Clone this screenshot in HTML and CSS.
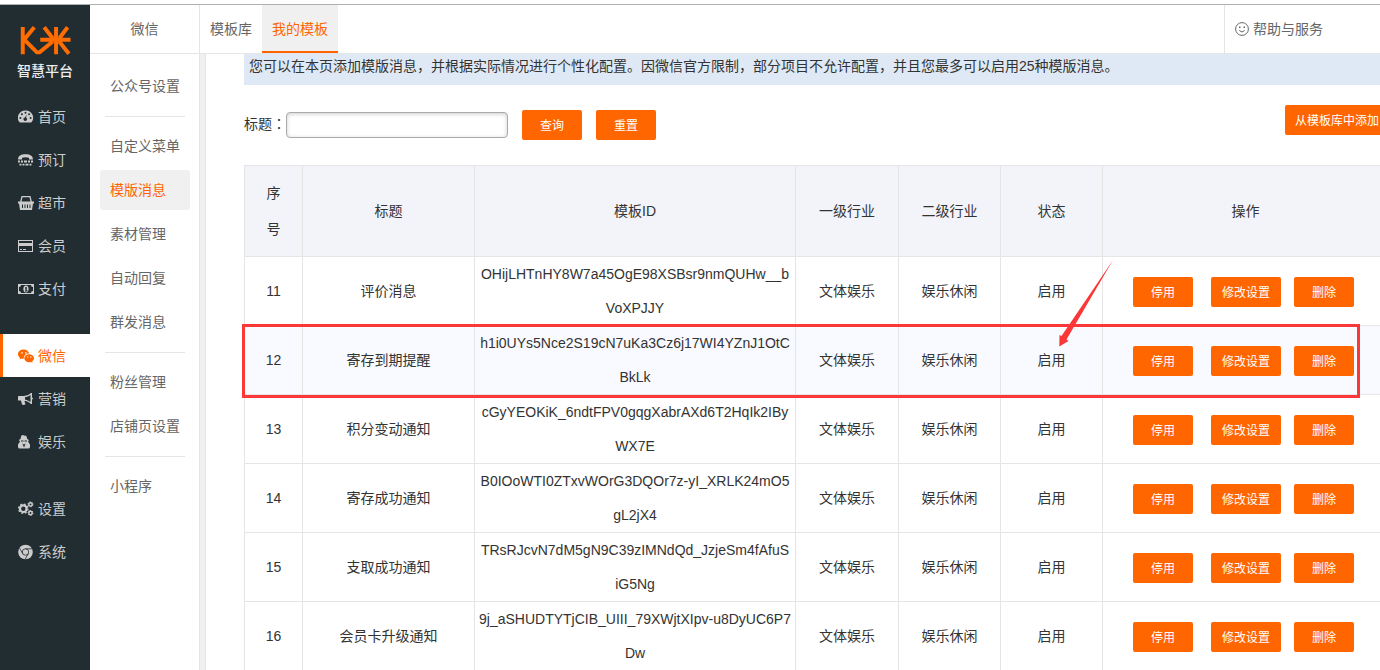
FILE: index.html
```html
<!DOCTYPE html>
<html lang="zh-CN">
<head>
<meta charset="utf-8">
<title>我的模板</title>
<link rel="stylesheet" href="styles.css">
</head>
<body>
<div class="app">
  <nav class="rail" aria-label="主导航">
    <div class="brand">
      <svg class="brand-mark" viewBox="60 78 158 88" fill="none" stroke="#ff6c00" stroke-width="12" aria-hidden="true">
        <path d="M70 81V164M105 82L77 116V122L113 158H121L161 125M123 119.500H215M171 81V164M135 82L161 115M206 82L181 115M180 124L210 162"/>
      </svg>
      <div class="brand-name">智慧平台</div>
    </div>
    <div class="rail-group">
      <a class="rail-item" href="#"><svg viewBox="0 0 16 16"><path fill="currentColor" fill-rule="evenodd" d="M7.500 1.500a7.300 7.300 0 0 0-6.200 11.600q.2.400.7.400h11q.5 0 .7-.4A7.300 7.300 0 0 0 7.500 1.500zM7.500 2.700a1 1 0 1 1 0 2 1 1 0 0 1 0-2zM3.900 4.300a1 1 0 1 1 0 2 1 1 0 0 1 0-2zM11.100 4.300a1 1 0 1 1 0 2 1 1 0 0 1 0-2zM2.400 8a1 1 0 1 1 0 2 1 1 0 0 1 0-2zM12.600 8a1 1 0 1 1 0 2 1 1 0 0 1 0-2zM8.700 5.700L8.100 8.700A1.700 1.700 0 1 1 6.900 8.500z"/></svg>首页</a>
      <a class="rail-item" href="#"><svg viewBox="0 0 16 16"><path fill="currentColor" d="M0 7.500C0 3.500 3.500 2.200 7.500 2.200S15 3.500 15 7.500H11V5.800Q7.500 4.800 4 5.800V7.500zM0 8.500h2v2H0zM3 8.500h2v2H3zM6 8.500h3v2H6zM10 8.500h2v2h-2zM13 8.500h2v2h-2zM1.500 11.800h2v1.700h-2zM4.500 11.800h2v1.700h-2zM7.500 11.800h3v1.700h-3zM11.500 11.800h2v1.700h-2z"/></svg>预订</a>
      <a class="rail-item" href="#"><svg viewBox="0 0 16 16"><path fill="none" stroke="currentColor" stroke-width="1.300" d="M2.500 8L4 1.700H12L13.500 8"/><path fill="currentColor" fill-rule="evenodd" d="M0 6.500H16V8.500H15L14 15H2L1 8.500H0zM4 9.500V13H5V9.500zM6.500 9.500V13h1V9.500zM9 9.500V13h1V9.500zM11.500 9.500V13h1V9.500z"/></svg>超市</a>
      <a class="rail-item" href="#"><svg viewBox="0 0 16 16"><path fill="currentColor" fill-rule="evenodd" d="M0 2H15V14H0zM1 3V5H14V3zM1 8V13H14V8zM2 11H4V12H2zM5 11H8V12H5z"/></svg>会员</a>
      <a class="rail-item" href="#"><svg viewBox="0 0 16 16"><path fill="currentColor" fill-rule="evenodd" d="M0 3H16V13H0zM3 4Q3 6 1 6V10Q3 10 3 12H13Q13 10 15 10V6Q13 6 13 4zM8 4.500C11.500 4.500 11.500 11.500 8 11.500S4.500 4.500 8 4.500zM7 6.500V7.500H7.500V9.500H7V10.500H9.500V9.500H8.800V6H8z"/></svg>支付</a>
    </div>
    <div class="rail-group">
      <a class="rail-item active" href="#"><svg viewBox="0 0 16 16"><path fill="currentColor" fill-rule="evenodd" d="M5.800 1.500C2.500 1.500 0 3.500 0 6.200c0 1.500.8 2.800 2.200 3.700L1.600 11.500l2-1c.7.200 1.400.3 2.200.3C5.500 7.500 8 5.500 11.200 5.600 10.700 3.300 8.500 1.500 5.800 1.500zM4 4.100a.8.800 0 1 1 0 1.600.8.800 0 0 1 0-1.600zM7.900 4.100a.8.800 0 1 1 0 1.600.8.800 0 0 1 0-1.600zM11.200 6.200c-2.800 0-4.900 1.800-4.900 4s2.100 4 4.900 4c.6 0 1.200-.1 1.800-.3l1.600.9-.5-1.500c1.200-.8 1.900-1.900 1.900-3.100 0-2.200-2.100-4-4.800-4zM9.600 8.200a.7.700 0 1 1 0 1.400.7.700 0 0 1 0-1.400zM12.800 8.200a.7.700 0 1 1 0 1.400.7.700 0 0 1 0-1.400z"/></svg>微信</a>
      <a class="rail-item" href="#"><svg viewBox="0 0 16 16"><path fill="currentColor" fill-rule="evenodd" d="M0 5.500Q0 5 1 5H6Q10 5 13 2H14V6.500Q15 7 15 7.500T14 8.500V13H13Q10 10 7 9.700Q6 10.500 7 12L7.500 13Q6 14.500 4 13.500L3 9.500H1Q0 9.500 0 9zM7 6.200V8.500Q10 9 12.500 11V4Q10 6 7 6.200z"/></svg>营销</a>
      <a class="rail-item" href="#"><svg viewBox="0 0 16 16"><path fill="currentColor" fill-rule="evenodd" d="M3.500 1.500Q4.500 .5 5.500 1.300T8 1.500Q9 3 9.300 5L11 6 10 7.500 12 10.500V13Q12 14.500 10 14.500H2Q0 14.500 0 13V10.500L2 7.500 .8 6 2.500 5Q2.700 3 3.500 1.500zM3 6.500V7.500H5.500V6.500zM6.500 6.500V7.500H9V6.500zM4.500 9.500L5.500 13.500 6 10.500zM7.500 9.500L6 10.500 6.500 13.500z"/></svg>娱乐</a>
    </div>
    <div class="rail-group">
      <a class="rail-item" href="#"><svg viewBox="0 0 16 16" fill="none" stroke="currentColor"><circle cx="5.300" cy="7.700" r="3.300" stroke-width="2.200"/><circle cx="5.300" cy="7.700" r="4.700" stroke-width="1.300" stroke-dasharray="1.850 1.840"/><circle cx="12.500" cy="3.400" r="1.700" stroke-width="1.500"/><circle cx="12.500" cy="3.400" r="2.500" stroke-width="1" stroke-dasharray="1.300 1.320"/><circle cx="12.500" cy="12" r="1.700" stroke-width="1.500"/><circle cx="12.500" cy="12" r="2.500" stroke-width="1" stroke-dasharray="1.300 1.320"/></svg>设置</a>
      <a class="rail-item" href="#"><svg viewBox="0 0 16 16"><circle cx="7.500" cy="8" r="7.300" fill="currentColor"/><g fill="none" stroke="#222d32" stroke-width=".8"><circle cx="7.500" cy="8" r="3.200"/><path d="M7.500 4.800H14M4.700 9.600L1.600 4.200M10.300 9.600L7.200 15"/></g></svg>系统</a>
    </div>
  </nav>

  <div class="workspace">
    <header class="topbar">
      <div class="section-name">微信</div>
      <nav class="tabs" aria-label="模板">
        <a class="tab" href="#">模板库</a>
        <a class="tab active" href="#">我的模板</a>
      </nav>
      <a class="help" href="#"><svg viewBox="0 0 14 14" fill="none" stroke="currentColor"><circle cx="7" cy="7" r="6.400"/><path d="M4.300 8.500Q7 11.500 9.700 8.500"/><path stroke-width="1.400" d="M4 5.300H5.500M8.500 5.300H10"/></svg>帮助与服务</a>
    </header>

    <div class="body">
      <nav class="submenu" aria-label="微信菜单">
        <div class="submenu-group"><a href="#">公众号设置</a></div>
        <div class="submenu-group">
          <a href="#">自定义菜单</a>
          <a class="active" href="#">模版消息</a>
          <a href="#">素材管理</a>
          <a href="#">自动回复</a>
          <a href="#">群发消息</a>
        </div>
        <div class="submenu-group">
          <a href="#">粉丝管理</a>
          <a href="#">店铺页设置</a>
        </div>
        <div class="submenu-group"><a href="#">小程序</a></div>
      </nav>

      <main class="content">
        <div class="sheet">
          <p class="notice">您可以在本页添加模版消息，并根据实际情况进行个性化配置。因微信官方限制，部分项目不允许配置，并且您最多可以启用25种模版消息。</p>
          <div class="toolbar">
            <form class="search">
              <label for="title">标题<span class="colon" lang="zh-TW">：</span></label>
              <input id="title" type="text">
              <button class="btn" type="button">查询</button>
              <button class="btn" type="button">重置</button>
            </form>
            <button class="btn btn-wide" type="button">从模板库中添加</button>
          </div>

          <div class="table-wrap">
            <table>
              <colgroup>
                <col class="col-no"><col class="col-title"><col class="col-id"><col class="col-trade"><col class="col-mid"><col class="col-mid"><col>
              </colgroup>
              <thead>
                <tr><th>序号</th><th>标题</th><th>模板ID</th><th>一级行业</th><th>二级行业</th><th>状态</th><th>操作</th></tr>
              </thead>
              <tbody>
                <tr><td>11</td><td>评价消息</td><td>OHijLHTnHY8W7a45OgE98XSBsr9nmQUHw__b<br>VoXPJJY</td><td>文体娱乐</td><td>娱乐休闲</td><td>启用</td><td class="ops"><div class="actions"><button class="btn" type="button">停用</button><button class="btn btn-mid" type="button">修改设置</button><button class="btn" type="button">删除</button></div></td></tr>
                <tr class="hover"><td>12</td><td>寄存到期提醒</td><td>h1i0UYs5Nce2S19cN7uKa3Cz6j17WI4YZnJ1OtC<br>BkLk</td><td>文体娱乐</td><td>娱乐休闲</td><td>启用</td><td class="ops"><div class="actions"><button class="btn" type="button">停用</button><button class="btn btn-mid" type="button">修改设置</button><button class="btn" type="button">删除</button></div></td></tr>
                <tr><td>13</td><td>积分变动通知</td><td>cGyYEOKiK_6ndtFPV0gqgXabrAXd6T2HqIk2IBy<br>WX7E</td><td>文体娱乐</td><td>娱乐休闲</td><td>启用</td><td class="ops"><div class="actions"><button class="btn" type="button">停用</button><button class="btn btn-mid" type="button">修改设置</button><button class="btn" type="button">删除</button></div></td></tr>
                <tr><td>14</td><td>寄存成功通知</td><td>B0IOoWTI0ZTxvWOrG3DQOr7z-yI_XRLK24mO5<br>gL2jX4</td><td>文体娱乐</td><td>娱乐休闲</td><td>启用</td><td class="ops"><div class="actions"><button class="btn" type="button">停用</button><button class="btn btn-mid" type="button">修改设置</button><button class="btn" type="button">删除</button></div></td></tr>
                <tr><td>15</td><td>支取成功通知</td><td>TRsRJcvN7dM5gN9C39zIMNdQd_JzjeSm4fAfuS<br>iG5Ng</td><td>文体娱乐</td><td>娱乐休闲</td><td>启用</td><td class="ops"><div class="actions"><button class="btn" type="button">停用</button><button class="btn btn-mid" type="button">修改设置</button><button class="btn" type="button">删除</button></div></td></tr>
                <tr><td>16</td><td>会员卡升级通知</td><td>9j_aSHUDTYTjCIB_UIII_79XWjtXIpv-u8DyUC6P7<br>Dw</td><td>文体娱乐</td><td>娱乐休闲</td><td>启用</td><td class="ops"><div class="actions"><button class="btn" type="button">停用</button><button class="btn btn-mid" type="button">修改设置</button><button class="btn" type="button">删除</button></div></td></tr>
              </tbody>
            </table>
            <div class="marker"></div>
            <svg class="marker-arrow" viewBox="0 0 60 90" aria-hidden="true"><path fill="#fc3737" d="M58 0L11.500 79.500 13.500 81 4.300 86.500 4.500 75 6.500 76z"/></svg>
          </div>
        </div>
      </main>
    </div>
  </div>
</div>
</body>
</html>
```
FILE: styles.css
```css
* {
  box-sizing: border-box;
}

body {
  margin: 0;
  padding-top: 4px;
  height: 100vh;
  overflow: hidden;
  background: #fff;
  color: #333;
  font: 14px/20px "Liberation Sans", "Noto Sans CJK SC", sans-serif;
}

a {
  color: inherit;
  text-decoration: none;
}

.app {
  display: flex;
  height: 100%;
  border-top: 1px solid #b0b0b0;
}

/* Main navigation */
.rail {
  flex: 0 0 90px;
  background: #222d32;
  color: #ccc;
}

.brand {
  height: 90px;
  padding-top: 21px;
  text-align: center;
}

.brand-mark {
  display: block;
  width: 53px;
  height: 29px;
  margin: 0 auto;
}

.brand-name {
  padding-top: 6px;
  color: #eee;
  font-weight: 500;
}

.rail-group {
  margin-bottom: 24px;
}

.rail-item {
  display: flex;
  align-items: center;
  gap: 4px;
  height: 43px;
  padding-left: 15px;
  border-left: 3px solid transparent;
}

.rail-item svg {
  width: 16px;
  height: 16px;
}

.rail-item.active {
  border-color: #ff6600;
  background: #fff;
  color: #ff6600;
}

.workspace {
  flex: 1;
  display: flex;
  flex-direction: column;
  min-width: 0;
}

/* Top bar */
.topbar {
  display: flex;
  flex: 0 0 49px;
  border-bottom: 1px solid #e5e5e5;
  color: #666;
  line-height: 48px;
}

.section-name {
  flex: 0 0 110px;
  border-right: 1px solid #e5e5e5;
  text-align: center;
}

.tabs {
  display: flex;
  flex: 1;
}

.tab {
  padding: 0 10px;
}

.tab.active {
  background: #f0f0f0;
  box-shadow: inset 0 -2px #ff6600;
  color: #ff6600;
}

.help {
  display: flex;
  flex: 0 0 156px;
  align-items: center;
  gap: 4px;
  padding-left: 10px;
  border-left: 1px solid #e5e5e5;
}

.help svg {
  width: 14px;
  height: 14px;
}

.body {
  display: flex;
  flex: 1;
  min-height: 0;
}

/* Section menu */
.submenu {
  flex: 0 0 110px;
  padding: 12px 9px 0 10px;
  border-right: 1px solid #e5e5e5;
  color: #666;
}

.submenu-group {
  display: grid;
  gap: 4px;
}

.submenu-group + .submenu-group::before {
  content: "";
  height: 1px;
  margin: 10px 5px 5px;
  background: #e5e5e5;
}

.submenu a {
  height: 40px;
  padding-left: 10px;
  border-radius: 3px;
  line-height: 40px;
  white-space: nowrap;
}

.submenu .active {
  background: #f0f0f0;
  color: #ff6600;
}

/* Page content */
.content {
  flex: 1;
  min-width: 0;
  overflow: hidden;
  padding-left: 39px;
  border-left: 5px solid #f0f0f0;
  box-shadow: inset 1px 0 #e5e5e5;
}

.sheet {
  margin-right: -9px;
}

.notice {
  margin: 0;
  padding: 2px 5px 9px;
  background: #dfe9f5;
  white-space: nowrap;
}

.toolbar {
  display: flex;
  justify-content: space-between;
  align-items: flex-start;
  padding: 20px 0 25px;
}

.search {
  display: flex;
  align-items: center;
  padding-top: 5px;
}

.search label {
  height: 24px;
}

.colon {
  font-family: "Noto Sans CJK TC", sans-serif;
}

.search input {
  width: 222px;
  height: 26px;
  padding: 0 6px;
  border: 1px solid #aaa;
  border-radius: 4px;
  box-shadow: inset 0 1px 4px rgba(0, 0, 0, 0.2);
  font: inherit;
}

.search .btn {
  margin-left: 14px;
}

.btn {
  width: 60px;
  height: 30px;
  padding: 2px 0 0;
  border: 0;
  border-radius: 2px;
  background: #ff6600;
  color: #fff;
  font: 12px/28px "Liberation Sans", "Noto Sans CJK SC", sans-serif;
}

.btn-mid {
  width: 70px;
}

.btn-wide {
  width: 104px;
}

/* Template table */
.table-wrap {
  position: relative;
}

table {
  width: 100%;
  border-collapse: collapse;
  table-layout: fixed;
}

.col-no { width: 58px; }
.col-title { width: 172px; }
.col-id { width: 321px; }
.col-trade { width: 103px; }
.col-mid { width: 102px; }

th,
td {
  border: 1px solid #e5e5e5;
  text-align: center;
}

th {
  padding: 9px 15px;
  background: #f3f4f9;
  font-weight: normal;
  line-height: 36px;
}

td {
  padding: 0 3px;
  line-height: 34px;
}

.hover td {
  background: #f9faff;
}

td.ops {
  padding: 2px 0 0 30px;
}

.actions {
  display: flex;
  gap: 13px;
}

.actions .btn:first-child {
  margin-right: 5px;
}

/* Annotation over the table */
.marker {
  position: absolute;
  top: 159px;
  right: 29px;
  left: -2px;
  height: 74px;
  border: 3px solid #fc3737;
}

.marker-arrow {
  position: absolute;
  top: 95px;
  left: 811px;
  width: 60px;
  height: 90px;
}
```
